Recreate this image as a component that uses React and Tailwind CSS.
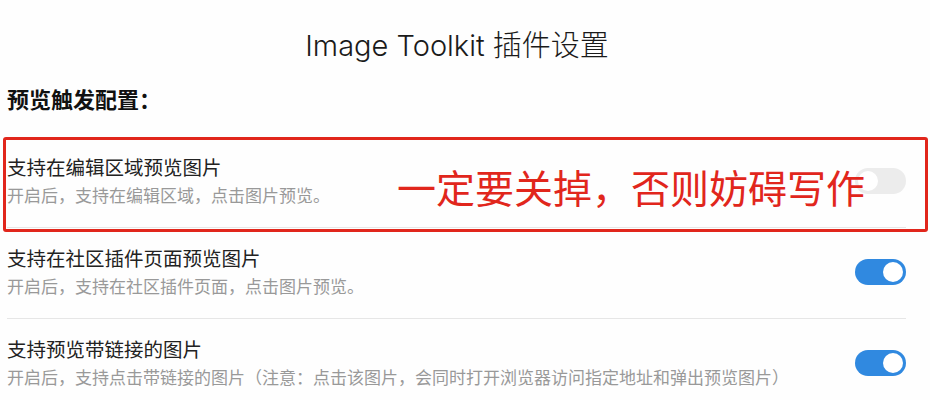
import React from 'react';

const FONT = { fontFamily: 'Inter, "Noto Sans CJK SC", sans-serif' };

const Toggle = ({ on }) => (
  <div
    className={`w-[51px] h-[26px] rounded-full flex items-center px-[3px] shrink-0 ${on ? 'bg-[#3089e0] justify-end' : 'bg-[#ececec] justify-start'}`}
  >
    <div className="w-[20px] h-[20px] rounded-full bg-white" />
  </div>
);

const rows = [
  { title: '支持在编辑区域预览图片', desc: '开启后，支持在编辑区域，点击图片预览。', on: false },
  { title: '支持在社区插件页面预览图片', desc: '开启后，支持在社区插件页面，点击图片预览。', on: true },
  {
    title: '支持预览带链接的图片',
    desc: '开启后，支持点击带链接的图片（注意：点击该图片，会同时打开浏览器访问指定地址和弹出预览图片）',
    on: true,
  },
];

export default function App() {
  return (
    <div className="relative w-[930px] h-[400px] overflow-hidden bg-[#fefefe]" style={FONT}>
      <h1 className="pt-[26px] pr-[16px] text-center text-[29px] leading-[40px] font-light text-[#1a1a1a]">Image Toolkit 插件设置</h1>
      <h2 className="mt-[19px] pl-[7px] text-[22px] leading-[30px] font-bold text-[#111]">预览触发配置：</h2>

      <div className="mt-[22px] pl-[7px] pr-[24px]">
        {rows.map((r, i) => (
          <div key={i} className="flex items-center justify-between border-b border-[#e6e6e6] pt-[18px] pb-[20px]">
            <div className="flex flex-col gap-[4px]">
              <div className="text-[19.5px] leading-[26px] text-[#222]">{r.title}</div>
              <div className="text-[17px] leading-[22px] text-[#999]">{r.desc}</div>
            </div>
            <Toggle on={r.on} />
          </div>
        ))}
      </div>

      {/* annotation */}
      <div className="absolute left-[3px] top-[137px] w-[925px] h-[95px] border-[3px] border-[#e1261c] rounded-[3px]">
        <div className="absolute left-[391px] top-[29px] text-[39px] leading-[39px] text-[#e1261c] whitespace-nowrap">
          一定要关掉，否则妨碍写作
        </div>
      </div>
    </div>
  );
}
